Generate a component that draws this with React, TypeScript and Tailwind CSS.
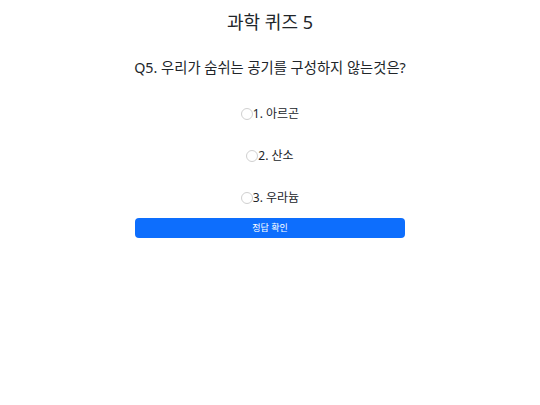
const options = ['1. 아르곤', '2. 산소', '3. 우라늄'];

export default function App() {
  return (
    <div
      className="w-[540px] h-[405px] bg-white text-[#212529] flex flex-col items-center"
      style={{ fontFamily: '"Noto Sans", "Noto Sans CJK KR", sans-serif' }}
    >
      <h1 className="mt-[9px] text-[18px] leading-[26px]">과학 퀴즈 5</h1>
      <h2 className="mt-[22px] text-[14.3px] leading-[22px]">Q5. 우리가 숨쉬는 공기를 구성하지 않는것은?</h2>
      <div className="mt-[26px] flex flex-col items-center gap-[24px]">
        {options.map((o) => (
          <label key={o} className="flex items-center text-[12px] leading-[18px]">
            <span className="w-[12px] h-[12px] rounded-full border border-[#d0d0d0] bg-white" />
            <span>{o}</span>
          </label>
        ))}
      </div>
      <button className="mt-[11px] w-[270px] h-[20px] rounded-[4px] bg-[#0d6efd] text-white text-[9px] leading-[20px]">
        정답 확인
      </button>
    </div>
  );
}
